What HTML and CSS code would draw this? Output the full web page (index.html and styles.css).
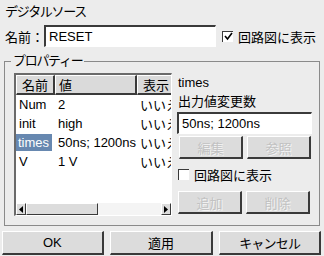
FILE: index.html
```html
<!DOCTYPE html>
<html lang="ja">
<head>
<meta charset="utf-8">
<link rel="stylesheet" href="styles.css">
</head>
<body>
<div class="dialog">
  <div class="title kana">デジタルソース</div>
  <div class="name-row">
    <span class="lbl">名前：</span>
    <div class="field name-field">RESET</div>
    <span class="check checked"><svg width="9" height="9" viewBox="0 0 9 9"><path d="M1 4 L3.5 7 L8 1" fill="none" stroke="#000" stroke-width="1.6"/></svg></span>
    <span class="chk-lbl">回路図に表示</span>
  </div>
  <div class="group">
    <div class="legend kana">プロパティー</div>
    <div class="group-body">
      <div class="table">
        <div class="tbl-inner">
          <div class="row head">
            <div class="c c1">名前</div><div class="c c2">値</div><div class="c c3">表示</div>
          </div>
          <div class="row"><div class="c c1">Num</div><div class="c c2">2</div><div class="c c3">いいえ</div></div>
          <div class="row"><div class="c c1">init</div><div class="c c2">high</div><div class="c c3">いいえ</div></div>
          <div class="row"><div class="c c1"><span class="sel">times</span></div><div class="c c2">50ns; 1200ns</div><div class="c c3">いいえ</div></div>
          <div class="row"><div class="c c1">V</div><div class="c c2">1 V</div><div class="c c3">いいえ</div></div>
        </div>
        <div class="hscroll">
          <div class="arrow"><svg width="4" height="7" viewBox="0 0 4 7"><path d="M4 0 L0 3.5 L4 7Z" fill="#000"/></svg></div>
          <div class="thumb"></div>
          <div class="track"></div>
          <div class="arrow"><svg width="4" height="7" viewBox="0 0 4 7"><path d="M0 0 L4 3.5 L0 7Z" fill="#000"/></svg></div>
        </div>
      </div>
      <div class="side">
        <div class="prop-name">times</div>
        <div class="prop-desc">出力値変更数</div>
        <div class="field side-field">50ns; 1200ns</div>
        <div class="btn-row">
          <div class="btn disabled">編集</div>
          <div class="btn disabled">参照</div>
        </div>
        <div class="chk-row">
          <span class="check"></span>
          <span class="chk-lbl">回路図に表示</span>
        </div>
        <div class="btn-row low">
          <div class="btn disabled">追加</div>
          <div class="btn disabled">削除</div>
        </div>
      </div>
    </div>
  </div>
  <div class="bottom">
    <div class="btn big">OK</div>
    <div class="btn big">適用</div>
    <div class="btn big kana-s">キャンセル</div>
  </div>
</div>
</body>
</html>
```
FILE: styles.css
```css
* { box-sizing: border-box; }
html, body { margin: 0; padding: 0; }
body {
  width: 324px;
  height: 256px;
  overflow: hidden;
  background: #ececec;
  font-family: "Liberation Sans", "Noto Sans CJK JP", sans-serif;
  font-size: 13px;
  color: #000;
}
.dialog { display: flex; flex-direction: column; height: 256px; }
.kana { letter-spacing: -1.3px; }
.kana-s { letter-spacing: -0.8px; }
.title { height: 21px; padding: 4px 0 0 5px; line-height: 16px; }
.name-row { display: flex; align-items: center; height: 24px; margin-top: 3px; }
.lbl { width: 44px; padding-left: 5px; }
.field {
  background: #fff;
  border-top: 2px solid #3a3a3a;
  border-left: 2px solid #3a3a3a;
  border-right: 1px solid #fff;
  border-bottom: 1px solid #fff;
  padding-left: 3px;
  display: flex;
  align-items: center;
}
.name-field { width: 172px; height: 22px; }
.check {
  width: 11px; height: 11px;
  background: #fff;
  border-top: 1px solid #3a3a3a;
  border-left: 1px solid #3a3a3a;
  display: inline-flex; align-items: center; justify-content: center;
}
.name-row .check { margin-left: 6px; }
.chk-lbl { margin-left: 5px; }
.group {
  position: relative;
  margin: 13px 4px 0 4px;
  height: 165px;
  border: 1px solid #8a8a8a;
}
.legend {
  position: absolute;
  left: 6px; top: -9px;
  padding: 0 2px;
  background: #ececec;
  line-height: 16px;
}
.group-body { display: flex; padding: 11px 0 0 9px; gap: 5px; }
.table {
  width: 158px; height: 143px;
  border-top: 2px solid #6a6a6a;
  border-left: 2px solid #6a6a6a;
  border-right: 1px solid #fff;
  border-bottom: 1px solid #fff;
  background: #fff;
  display: flex; flex-direction: column;
  overflow: hidden;
}
.tbl-inner { flex: 1; overflow: hidden; }
.row { display: flex; height: 19px; align-items: center; white-space: nowrap; }
.c { flex: none; overflow: hidden; padding-left: 3px; }
.c1 { width: 39px; }
.c2 { width: 82px; }
.c3 { width: 40px; }
.head { height: 20px; margin-bottom: 0; }
.head .c {
  height: 20px;
  background: #dadada;
  border-top: 1px solid #fff;
  border-left: 1px solid #fff;
  border-right: 2px solid #3a3a3a;
  border-bottom: 2px solid #3a3a3a;
  display: flex; align-items: center;
  padding-left: 5px;
}
.head .c2 { padding-left: 3px; }
.sel { background: #6788b0; color: #fff; display: inline-block; margin-left: -3px; padding: 0 3px 0 2px; line-height: 17px; }
.hscroll { height: 12px; display: flex; background: #f4f4f4; }
.arrow {
  width: 10px; height: 12px;
  background: #dcdcdc;
  border-top: 1px solid #fff;
  border-left: 1px solid #fff;
  border-right: 1px solid #3a3a3a;
  border-bottom: 1px solid #3a3a3a;
  display: flex; align-items: center; justify-content: center;
}
.thumb {
  width: 72px; height: 12px;
  background: #dcdcdc;
  border-top: 1px solid #fff;
  border-left: 1px solid #fff;
  border-right: 1px solid #3a3a3a;
  border-bottom: 1px solid #3a3a3a;
}
.track { flex: 1; }
.side { width: 135px; display: flex; flex-direction: column; }
.prop-name { height: 19px; line-height: 19px; padding-left: 1px; }
.prop-desc { height: 20px; line-height: 20px; padding-left: 1px; }
.side-field { height: 22px; width: 135px; }
.btn-row { display: flex; gap: 4px; margin-top: 2px; padding-left: 2px; }
.btn-row.low { margin-top: 10px; padding-left: 1px; }
.btn {
  height: 23px;
  background: #dcdcdc;
  border-top: 1px solid #fff;
  border-left: 1px solid #fff;
  border-right: 2px solid #3a3a3a;
  border-bottom: 2px solid #3a3a3a;
  display: flex; align-items: center; justify-content: center;
}
.btn-row .btn { width: 64px; }
.disabled { color: #c2c2c2; text-shadow: 1px 1px 0 #f4f4f4; }
.chk-row { display: flex; align-items: center; height: 14px; margin-top: 8px; padding-left: 1px; }
.bottom { display: flex; gap: 6px; padding: 5px 3px 0 2px; }
.big { width: 102px; height: 24px; }
.bottom .big:nth-child(2) { width: 104px; }
```
